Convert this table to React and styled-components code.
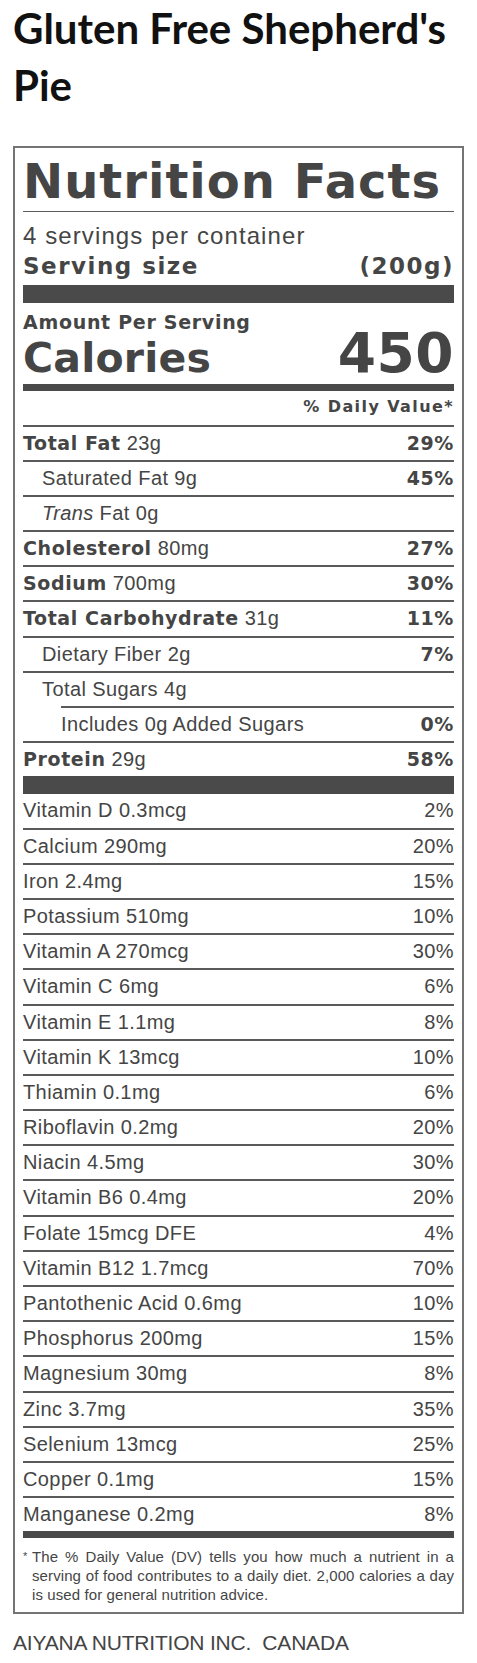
import React from 'react';
import styled, { createGlobalStyle } from 'styled-components';

const GlobalStyle = createGlobalStyle`
  body {
    margin: 0;
    background: #fff;
  }
`;

const Page = styled.div`
  padding: 0 13px 20px 13px;
`;

const Title = styled.h1`
  margin: 0;
  font-family: Lato, "Noto Sans", sans-serif;
  font-weight: 700;
  font-size: 42px;
  line-height: 57px;
  color: #111;
`;

const Label = styled.section`
  box-sizing: border-box;
  width: 451px;
  margin-top: 32px;
  padding: 9px 8px 8px 8px;
  border: 2px solid #747474;
  color: #454545;
  font-family: "Liberation Sans", Arial, sans-serif;
`;

const Heading = styled.h2`
  margin: 0;
  padding-bottom: 5.5px;
  border-bottom: 1px solid #5c5c5c;
  font-family: "DejaVu Sans", sans-serif;
  font-weight: 700;
  font-size: 48px;
  line-height: 48px;
  letter-spacing: 1px;
`;

const Servings = styled.div`
  padding-top: 10px;
  font-size: 24px;
  line-height: 28px;
  letter-spacing: 1.1px;
`;

const ServingSize = styled.div`
  display: flex;
  justify-content: space-between;
  margin-top: 3px;
  font-family: "DejaVu Sans", sans-serif;
  font-weight: 700;
  font-size: 23px;
  line-height: 26px;
  letter-spacing: 1.5px;
`;

const Bar = styled.div`
  height: ${(p) => p.$h}px;
  margin-top: ${(p) => p.$mt || 0}px;
  background: #4a4a4a;
`;

const Amount = styled.div`
  padding-top: 8px;
  font-family: "DejaVu Sans", sans-serif;
  font-weight: 700;
  font-size: 19px;
  line-height: 22px;
  letter-spacing: 0.7px;
`;

const CaloriesRow = styled.div`
  display: flex;
  justify-content: space-between;
  align-items: baseline;
  height: 40px;
  font-family: "DejaVu Sans", sans-serif;
  font-weight: 700;
  line-height: 40px;
`;

const CaloriesLabel = styled.span`
  font-size: 41px;
  letter-spacing: 0.2px;
`;

const CaloriesValue = styled.span`
  font-size: 55px;
  letter-spacing: 0.5px;
`;

const DailyHeader = styled.div`
  padding: 6.5px 0 7.5px 0;
  text-align: right;
  font-family: "DejaVu Sans", sans-serif;
  font-weight: 700;
  font-size: 16px;
  line-height: 20px;
  letter-spacing: 1.4px;
`;

const Row = styled.div`
  display: flex;
  justify-content: space-between;
  align-items: baseline;
  height: 33.2px;
  margin-left: ${(p) => p.$offset || 0}px;
  padding-left: ${(p) => p.$indent || 0}px;
  border-top: ${(p) => (p.$divider ? '2px solid #5a5a5a' : 'none')};
  font-size: 20px;
  line-height: 33.2px;
  letter-spacing: 0.4px;
  white-space: nowrap;
`;

const Strong = styled.span`
  font-family: "DejaVu Sans", sans-serif;
  font-weight: 700;
  font-size: 19px;
  letter-spacing: 0.6px;
`;

const Note = styled.div`
  display: flex;
  padding-top: 8.6px;
  font-size: 15px;
  line-height: 19px;
  letter-spacing: 0.1px;
`;

const Star = styled.span`
  width: 9px;
  flex: none;
  font-size: 11px;
`;

const NoteText = styled.p`
  flex: 1;
  margin: 0;
  text-align: justify;
`;

const Footer = styled.div`
  margin-top: 16.7px;
  font-family: "Liberation Sans", Arial, sans-serif;
  font-size: 21px;
  line-height: 24px;
  letter-spacing: -0.2px;
  color: #444;
  white-space: pre;
`;

const nutrients = [
  { label: 'Total Fat', amount: '23g', dv: '29%' },
  { sub: 'Saturated Fat 9g', dv: '45%', indent: 19 },
  { sub: <><i>Trans</i> Fat 0g</>, dv: '', indent: 19 },
  { label: 'Cholesterol', amount: '80mg', dv: '27%' },
  { label: 'Sodium', amount: '700mg', dv: '30%' },
  { label: 'Total Carbohydrate', amount: '31g', dv: '11%' },
  { sub: 'Dietary Fiber 2g', dv: '7%', indent: 19 },
  { sub: 'Total Sugars 4g', dv: '', indent: 19 },
  { sub: 'Includes 0g Added Sugars', dv: '0%', offset: 38 },
  { label: 'Protein', amount: '29g', dv: '58%' },
];

const micros = [
  ['Vitamin D 0.3mcg', '2%'],
  ['Calcium 290mg', '20%'],
  ['Iron 2.4mg', '15%'],
  ['Potassium 510mg', '10%'],
  ['Vitamin A 270mcg', '30%'],
  ['Vitamin C 6mg', '6%'],
  ['Vitamin E 1.1mg', '8%'],
  ['Vitamin K 13mcg', '10%'],
  ['Thiamin 0.1mg', '6%'],
  ['Riboflavin 0.2mg', '20%'],
  ['Niacin 4.5mg', '30%'],
  ['Vitamin B6 0.4mg', '20%'],
  ['Folate 15mcg DFE', '4%'],
  ['Vitamin B12 1.7mcg', '70%'],
  ['Pantothenic Acid 0.6mg', '10%'],
  ['Phosphorus 200mg', '15%'],
  ['Magnesium 30mg', '8%'],
  ['Zinc 3.7mg', '35%'],
  ['Selenium 13mcg', '25%'],
  ['Copper 0.1mg', '15%'],
  ['Manganese 0.2mg', '8%'],
];

export default function App() {
  return (
    <Page>
      <GlobalStyle />
      <Title>Gluten Free Shepherd's Pie</Title>
      <Label>
        <Heading>Nutrition Facts</Heading>
        <Servings>4 servings per container</Servings>
        <ServingSize>
          <span>Serving size</span>
          <span>(200g)</span>
        </ServingSize>
        <Bar $h={18} $mt={6} />
        <Amount>Amount Per Serving</Amount>
        <CaloriesRow>
          <CaloriesLabel>Calories</CaloriesLabel>
          <CaloriesValue>450</CaloriesValue>
        </CaloriesRow>
        <Bar $h={7} $mt={11} />
        <DailyHeader>% Daily Value*</DailyHeader>
        {nutrients.map((n, i) => (
          <Row key={`n-${i}`} $divider $indent={n.indent} $offset={n.offset}>
            <span>
              {n.label ? (
                <>
                  <Strong>{n.label}</Strong> {n.amount}
                </>
              ) : (
                n.sub
              )}
            </span>
            <Strong>{n.dv}</Strong>
          </Row>
        ))}
        <Bar $h={18} />
        {micros.map(([name, dv], i) => (
          <Row key={`m-${i}`} $divider={i > 0}>
            <span>{name}</span>
            <span>{dv}</span>
          </Row>
        ))}
        <Bar $h={7} />
        <Note>
          <Star>*</Star>
          <NoteText>
            The % Daily Value (DV) tells you how much a nutrient in a serving of food
            contributes to a daily diet. 2,000 calories a day is used for general
            nutrition advice.
          </NoteText>
        </Note>
      </Label>
      <Footer>AIYANA NUTRITION INC.  CANADA</Footer>
    </Page>
  );
}
